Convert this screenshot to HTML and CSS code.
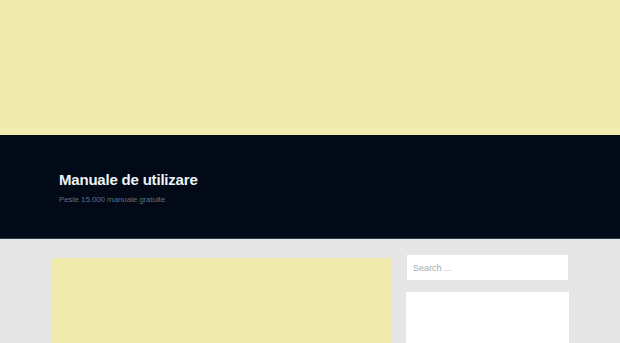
FILE: index.html
```html
<!DOCTYPE html>
<html lang="ro">
<head>
  <meta charset="UTF-8" />
  <meta name="viewport" content="width=device-width, initial-scale=1" />
  <title>Manuale de utilizare</title>
  <link rel="stylesheet" href="styles.css">
</head>
<body>
  <div class="banner"></div>

  <header class="site-header">
    <h1 class="site-title">Manuale de utilizare</h1>
    <p class="site-desc">Peste 15.000 manuale gratuite</p>
  </header>

  <div class="content">
    <main class="main">
      <div class="ad-box"></div>
    </main>
    <aside class="sidebar">
      <input type="search" class="search" placeholder="Search ..." />
      <div class="widget"></div>
    </aside>
  </div>
</body>
</html>
```

FILE: styles.css
```css
body {
  margin: 0;
  font-family: 'Liberation Sans', Arial, sans-serif;
  background: #e6e6e6;
  color: #333;
}

.banner {
  height: 135px;
  background: #f2ebb0;
}

.site-header {
  background: #010a16;
  height: 104px;
  padding: 36px 59px 0;
  box-sizing: border-box;
  border-bottom: 1px solid #2c3e4a;
}

.site-title {
  margin: 0;
  font-size: 15px;
  font-weight: bold;
  letter-spacing: -0.2px;
  color: #eef3f8;
  line-height: 18px;
}

.site-desc {
  margin: 6px 0 0;
  font-size: 8px;
  letter-spacing: -0.1px;
  color: #5e7182;
  line-height: 10px;
}

.content {
  display: flex;
  padding: 0 51px 0 52px;
  gap: 15px;
}

.main {
  width: 339px;
  padding-top: 19px;
}

.ad-box {
  height: 120px;
  background: #f2ebb0;
}

.sidebar {
  width: 163px;
  padding-top: 16px;
  display: flex;
  flex-direction: column;
  gap: 12px;
}

.search {
  width: 161px;
  height: 25px;
  margin-left: 1px;
  box-sizing: border-box;
  border: none;
  background: #fff;
  padding: 0 6px;
  font-family: 'Liberation Sans', Arial, sans-serif;
  font-size: 9px;
  outline: none;
}

.search::placeholder {
  color: #aaa;
}

.widget {
  height: 80px;
  background: #fff;
}
```
